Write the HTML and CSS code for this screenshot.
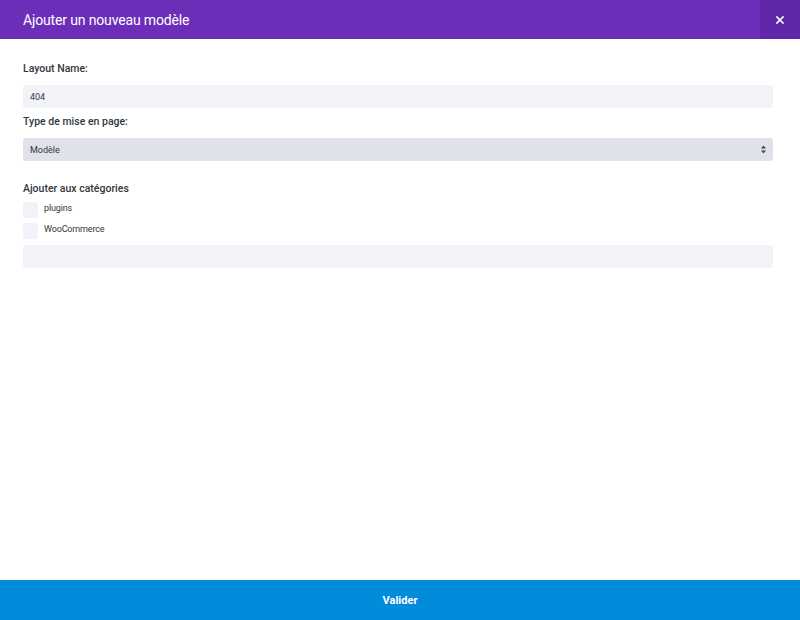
FILE: index.html
```html
<!DOCTYPE html>
<html>
<head>
<meta charset="utf-8">
<link rel="stylesheet" href="styles.css">
</head>
<body>
<div class="modal">
  <header class="modal-header">
    <h1 class="modal-title">Ajouter un nouveau modèle</h1>
    <button class="close-btn" aria-label="Fermer">
      <svg width="8" height="8" viewBox="0 0 8 8"><path d="M1 1L7 7M7 1L1 7" stroke="#fff" stroke-width="1.6" stroke-linecap="square"/></svg>
    </button>
  </header>
  <main class="modal-body">
    <div class="field">
      <label class="field-label">Layout Name:</label>
      <div class="input">404</div>
    </div>
    <div class="field">
      <label class="field-label">Type de mise en page:</label>
      <div class="input select">
        <span>Modèle</span>
        <svg class="select-arrows" width="5" height="9" viewBox="0 0 5 9"><path d="M0 3.5L2.5 0.5L5 3.5Z M0 5.5L2.5 8.5L5 5.5Z" fill="#444"/></svg>
      </div>
    </div>
    <div class="field categories">
      <label class="field-label">Ajouter aux catégories</label>
      <div class="check-row"><span class="checkbox"></span><span class="check-label">plugins</span></div>
      <div class="check-row"><span class="checkbox"></span><span class="check-label">WooCommerce</span></div>
      <div class="input empty"></div>
    </div>
  </main>
  <footer class="modal-footer">
    <button class="submit-btn">Valider</button>
  </footer>
</div>
</body>
</html>
```
FILE: styles.css
```css
* { box-sizing: border-box; }
html, body { margin: 0; padding: 0; height: 100%; }
body {
  font-family: Roboto, "Noto Sans", sans-serif;
  background: #fff;
  color: #32373c;
}
.modal {
  display: flex;
  flex-direction: column;
  height: 620px;
  width: 800px;
}
.modal-header {
  height: 39px;
  background: #6c2eb9;
  display: flex;
  align-items: center;
  justify-content: space-between;
  flex-shrink: 0;
}
.modal-title {
  margin: 0 0 0 23px;
  font-size: 14px;
  font-weight: 400;
  letter-spacing: -0.15px;
  color: #fff;
}
.close-btn {
  width: 40px;
  height: 39px;
  border: 0;
  padding: 0;
  background: #5f27a8;
  display: flex;
  align-items: center;
  justify-content: center;
}
.modal-body {
  flex: 1;
  padding: 23px 27px 0 23px;
}
.field { display: flex; flex-direction: column; }
.field + .field { margin-top: 7px; }
.field.categories { margin-top: 21px; }
.field-label {
  font-size: 10.5px;
  font-weight: 500;
  color: #32373c;
  line-height: 14px;
  margin-bottom: 9px;
}
.categories .field-label { margin-bottom: 6px; }
.input {
  height: 23px;
  background: #f1f3f8;
  border-radius: 3px;
  font-size: 9px;
  color: #32373c;
  padding: 0 7px;
  display: flex;
  align-items: center;
}
.select {
  background: #dfe2ea;
  justify-content: space-between;
}
.check-row {
  display: flex;
  align-items: flex-start;
  height: 16px;
  margin-bottom: 5px;
}
.checkbox {
  width: 15px;
  height: 16px;
  background: #f1f3f8;
  border-radius: 2px;
  flex-shrink: 0;
}
.check-label {
  font-size: 9px;
  letter-spacing: -0.15px;
  margin-left: 6px;
  line-height: 12px;
  color: #32373c;
}
.input.empty { margin-top: 1px; }
.modal-footer {
  height: 40px;
  background: #008bdb;
  flex-shrink: 0;
  display: flex;
}
.submit-btn {
  flex: 1;
  border: 0;
  background: transparent;
  color: #fff;
  font-family: Roboto, "Noto Sans", sans-serif;
  font-size: 11px;
  font-weight: 700;
  padding: 0;
}
```
